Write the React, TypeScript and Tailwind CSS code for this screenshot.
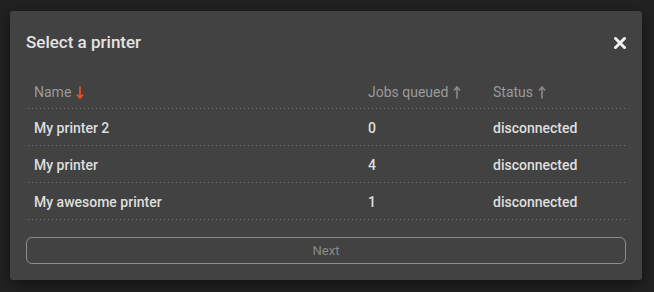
import React from "react";

const rows = [
  { name: "My printer 2", jobs: 0, status: "disconnected" },
  { name: "My printer", jobs: 4, status: "disconnected" },
  { name: "My awesome printer", jobs: 1, status: "disconnected" },
];

// dotted separator: 1px dots every 4px
const dotted =
  "bg-[linear-gradient(to_right,#7a7a7a_1px,transparent_1px)] bg-[length:4px_1px] bg-repeat-x bg-bottom";

function SortArrow({ dir, active }: { dir: "up" | "down"; active?: boolean }) {
  const color = active ? "#f4511e" : "#8c8c8c";
  return (
    <svg width="8" height="13" viewBox="0 0 8 13" className="ml-[5px] inline-block" fill="none" stroke={color} strokeWidth="1.6">
      {dir === "down" ? (
        <>
          <line x1="4" y1="0.5" x2="4" y2="11.5" />
          <path d="M1 8.5 L4 12 L7 8.5" />
        </>
      ) : (
        <>
          <line x1="4" y1="1.5" x2="4" y2="12.5" />
          <path d="M1 4.5 L4 1 L7 4.5" />
        </>
      )}
    </svg>
  );
}

export default function App() {
  return (
    <div className="w-[654px] h-[292px] bg-[#222222] pt-[11px] pl-[10px]" style={{ fontFamily: "Roboto, 'Noto Sans', sans-serif" }}>
      <div className="w-[632px] h-[269px] bg-[#424242] rounded-[3px] shadow-[0_4px_16px_rgba(0,0,0,0.5)] px-4 flex flex-col">
        <div className="flex items-center justify-between h-[62px] pt-[2px]">
          <h2 className="text-[17px] font-medium text-[#e4e4e4]">Select a printer</h2>
          <svg width="12" height="12" viewBox="0 0 12 12" stroke="#f0f0f0" strokeWidth="3" strokeLinecap="square">
            <line x1="1.5" y1="1.5" x2="10.5" y2="10.5" />
            <line x1="10.5" y1="1.5" x2="1.5" y2="10.5" />
          </svg>
        </div>
        <div className="w-[600px] text-[14px]">
          <div className={`grid grid-cols-[334px_125px_141px] h-[36px] items-center text-[#9a9a9a] pt-[2px] ${dotted}`}>
            <span className="px-2 inline-flex items-center">Name<SortArrow dir="down" active /></span>
            <span className="px-2 inline-flex items-center">Jobs queued<SortArrow dir="up" /></span>
            <span className="px-2 inline-flex items-center">Status<SortArrow dir="up" /></span>
          </div>
          {rows.map((r) => (
            <div key={r.name} className={`grid grid-cols-[334px_125px_141px] h-[37px] items-center pt-[1px] text-[#dedede] font-medium ${dotted}`}>
              <span className="px-2">{r.name}</span>
              <span className="px-2">{r.jobs}</span>
              <span className="px-2">{r.status}</span>
            </div>
          ))}
        </div>
        <button className="mt-[17px] w-[600px] h-[27px] rounded-[6px] border border-[#8c8c8c] text-[13px] text-[#8a8a8a]">
          Next
        </button>
      </div>
    </div>
  );
}
